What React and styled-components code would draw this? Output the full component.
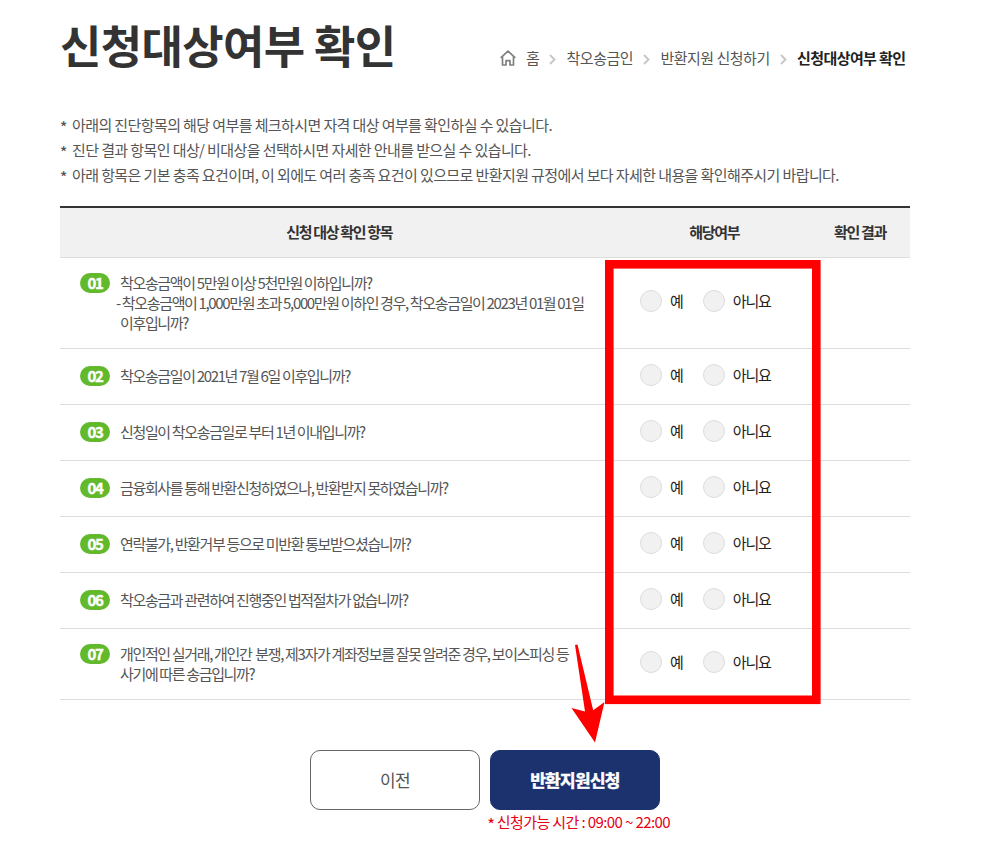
import React, { useState } from 'react';
import styled, { createGlobalStyle } from 'styled-components';

const GlobalStyle = createGlobalStyle`
  * {
    box-sizing: border-box;
  }

  body {
    margin: 0;
    background-color: #fff;
    color: #555;
    font-family: 'Noto Sans CJK KR', sans-serif;
    font-size: 15px;
  }
`;

const Page = styled.main`
  position: relative;
  width: 1002px;
  height: 861px;
  padding: 17px 92px 0 60px;
  overflow: hidden;
`;

const PageHeader = styled.header`
  display: flex;
  justify-content: space-between;
  height: 95px;
`;

const Title = styled.h1`
  margin: 0;
  color: #333;
  font-size: 45px;
  font-weight: 700;
  line-height: 56px;
  letter-spacing: -0.65px;
  white-space: nowrap;
`;

const Breadcrumb = styled.nav`
  display: flex;
  align-items: center;
  height: 24px;
  margin-top: 29px;
  padding-right: 4.5px;
  white-space: nowrap;
`;

const Crumb = styled.span`
  color: ${props => (props.$current ? '#222' : '#555')};
  font-weight: ${props => (props.$current ? 700 : 400)};
  letter-spacing: ${props => (props.$current ? '-0.6px' : '-0.5px')};
  line-height: 24px;
`;

const HomeIcon = styled.svg`
  width: 16px;
  height: 16px;
  margin-right: 10px;
`;

const Separator = styled.svg`
  width: 7px;
  height: 11px;
  margin: 2px 10.2px 0 10.2px;
`;

const NoticeList = styled.ul`
  margin: 0;
  padding: 0;
  height: 94px;
  list-style: none;
`;

const Notice = styled.li`
  display: flex;
  height: 25px;
  line-height: 25px;
  letter-spacing: -0.6px;
  white-space: nowrap;
`;

const Mark = styled.span`
  display: inline-block;
  width: ${props => props.$width};
  height: 24px;
  padding-top: 2px;
  font-weight: 500;
  vertical-align: top;
`;

const Table = styled.section`
  border-top: 2px solid #333;
`;

const HeadRow = styled.div`
  display: grid;
  grid-template-columns: 560px 190px 100px;
  height: 50px;
  border-bottom: 1px solid #ddd;
  background-color: #f1f1f1;
`;

const HeadCell = styled.div`
  padding-right: 1.5px;
  color: #333;
  font-weight: 700;
  line-height: 48px;
  letter-spacing: -1.35px;
  text-align: center;

  &:last-child {
    padding-right: 0;
  }
`;

const Row = styled.div`
  display: grid;
  grid-template-columns: 560px 190px 100px;
  align-items: center;
  border-bottom: 1px solid #ddd;
`;

const Question = styled.div`
  display: flex;
  gap: 10px;
  padding: ${props => (props.$single ? '17px 0 18px 20px' : '15px 0 15px 20px')};
`;

const NumberBadge = styled.span`
  flex: none;
  width: 30px;
  height: 20px;
  border-radius: 10px;
  background-color: #62b92c;
  color: #fff;
  font-weight: 700;
  line-height: 20px;
  letter-spacing: -1.3px;
  text-align: center;
  -webkit-text-stroke: 0.4px #fff;
`;

const QuestionText = styled.div`
  line-height: 20px;
  letter-spacing: -1.35px;
  white-space: nowrap;
`;

const SubLine = styled.div`
  text-indent: -4px;
`;

const Options = styled.div`
  display: flex;
  padding: 0 0 3.5px 20px;
`;

const Option = styled.label`
  display: flex;
  align-items: center;
  height: 22px;
  margin-right: 20px;
  color: #222;
  letter-spacing: -1.1px;
  line-height: 22px;
  white-space: nowrap;
  cursor: pointer;
`;

const Radio = styled.input`
  appearance: none;
  width: 22px;
  height: 22px;
  margin: 0 8px 0 0;
  border: 1px solid #ddd;
  border-radius: 50%;
  background-color: #f1f1f1;

  &:checked {
    border: 6px solid #1b326f;
  }
`;

const Actions = styled.div`
  display: flex;
  gap: 10px;
  margin: 50px 0 0 250px;
`;

const Button = styled.button`
  width: 170px;
  height: 60px;
  padding: 0 0 2px;
  border: 1px solid ${props => (props.$primary ? '#1b326f' : '#666')};
  border-radius: 10px;
  background-color: ${props => (props.$primary ? '#1b326f' : '#fff')};
  color: ${props => (props.$primary ? '#fff' : '#555')};
  font-family: inherit;
  font-size: 17px;
  font-weight: ${props => (props.$primary ? 700 : 400)};
  letter-spacing: -0.7px;
  -webkit-text-stroke: ${props => (props.$primary ? '0.5px #fff' : '0')};
  cursor: pointer;
`;

const Hours = styled.p`
  margin: 0 0 0 427.5px;
  color: #e60012;
  line-height: 24px;
  letter-spacing: -0.6px;
  white-space: nowrap;
`;

// Guide marks drawn over the form
const Guide = styled.svg`
  position: absolute;
  left: 0;
  top: 0;
  pointer-events: none;
`;

const crumbs = ['홈', '착오송금인', '반환지원 신청하기', '신청대상여부 확인'];

const notices = [
  '아래의 진단항목의 해당 여부를 체크하시면 자격 대상 여부를 확인하실 수 있습니다.',
  '진단 결과 항목인 대상/ 비대상을 선택하시면 자세한 안내를 받으실 수 있습니다.',
  '아래 항목은 기본 충족 요건이며, 이 외에도 여러 충족 요건이 있으므로 반환지원 규정에서 보다 자세한 내용을 확인해주시기 바랍니다.'
];

const questions = [
  {
    id: '01',
    lines: ['착오송금액이 5만원 이상 5천만원 이하입니까?'],
    sub: '- 착오송금액이 1,000만원 초과 5,000만원 이하인 경우, 착오송금일이 2023년 01월 01일',
    rest: '이후입니까?',
    no: '아니요'
  },
  { id: '02', lines: ['착오송금일이 2021년 7월 6일 이후입니까?'], no: '아니요' },
  { id: '03', lines: ['신청일이 착오송금일로 부터 1년 이내입니까?'], no: '아니요' },
  { id: '04', lines: ['금융회사를 통해 반환신청하였으나, 반환받지 못하였습니까?'], no: '아니요' },
  { id: '05', lines: ['연락불가, 반환거부 등으로 미반환 통보받으셨습니까?'], no: '아니오' },
  { id: '06', lines: ['착오송금과 관련하여 진행중인 법적절차가 없습니까?'], no: '아니요' },
  {
    id: '07',
    lines: [
      '개인적인 실거래, 개인간\u00a0 분쟁, 제3자가 계좌정보를 잘못 알려준 경우, 보이스피싱 등',
      '사기에 따른 송금입니까?'
    ],
    no: '아니요'
  }
];

function App() {
  const [answers, setAnswers] = useState({});

  const answer = (id, value) => setAnswers({ ...answers, [id]: value });

  return (
    <>
      <GlobalStyle />
      <Page>
        <PageHeader>
          <Title>신청대상여부 확인</Title>
          <Breadcrumb>
            <HomeIcon
              viewBox="0 0 16 16"
              fill="none"
              stroke="#808080"
              strokeWidth="1.7"
              strokeLinejoin="round"
              strokeLinecap="round"
            >
              <path d="M1.2 7.3 8 1.2l6.8 6.1M2.5 6.5V15H6v-4.3h4V15h3.5V6.5" />
            </HomeIcon>
            {crumbs.map((name, i) => (
              <React.Fragment key={name}>
                {i > 0 && (
                  <Separator viewBox="0 0 7 11" fill="none" stroke="#c8c8c8" strokeWidth="2">
                    <path d="M1 1l4.5 4.5L1 10" />
                  </Separator>
                )}
                <Crumb $current={i === crumbs.length - 1}>{name}</Crumb>
              </React.Fragment>
            ))}
          </Breadcrumb>
        </PageHeader>

        <NoticeList>
          {notices.map(text => (
            <Notice key={text}>
              <Mark $width="12px">*</Mark>
              {text}
            </Notice>
          ))}
        </NoticeList>

        <Table>
          <HeadRow>
            <HeadCell>신청 대상 확인 항목</HeadCell>
            <HeadCell>해당여부</HeadCell>
            <HeadCell>확인 결과</HeadCell>
          </HeadRow>
          {questions.map(q => (
            <Row key={q.id}>
              <Question $single={q.lines.length === 1 && !q.sub}>
                <NumberBadge>{q.id}</NumberBadge>
                <QuestionText>
                  {q.lines.map(line => (
                    <div key={line}>{line}</div>
                  ))}
                  {q.sub && <SubLine>{q.sub}</SubLine>}
                  {q.rest && <div>{q.rest}</div>}
                </QuestionText>
              </Question>
              <Options>
                <Option>
                  <Radio
                    type="radio"
                    name={q.id}
                    checked={answers[q.id] === 'yes'}
                    onChange={() => answer(q.id, 'yes')}
                  />
                  예
                </Option>
                <Option>
                  <Radio
                    type="radio"
                    name={q.id}
                    checked={answers[q.id] === 'no'}
                    onChange={() => answer(q.id, 'no')}
                  />
                  {q.no}
                </Option>
              </Options>
            </Row>
          ))}
        </Table>

        <Actions>
          <Button>이전</Button>
          <Button $primary>반환지원신청</Button>
        </Actions>
        <Hours>
          <Mark $width="9.3px">*</Mark>
          신청가능 시간 : 09:00 ~ 22:00
        </Hours>

        <Guide width="1002" height="861" viewBox="0 0 1002 861">
          <rect x="609.3" y="264.3" width="207" height="435.5" fill="none" stroke="#f00" strokeWidth="8.6" />
          <path d="M575 645l2.5-.5 15.7 65.7 11.300-8.200-9.500 40.500-23.500-34.500 13.500 3.500z" fill="#f00" />
        </Guide>
      </Page>
    </>
  );
}

export default App;
